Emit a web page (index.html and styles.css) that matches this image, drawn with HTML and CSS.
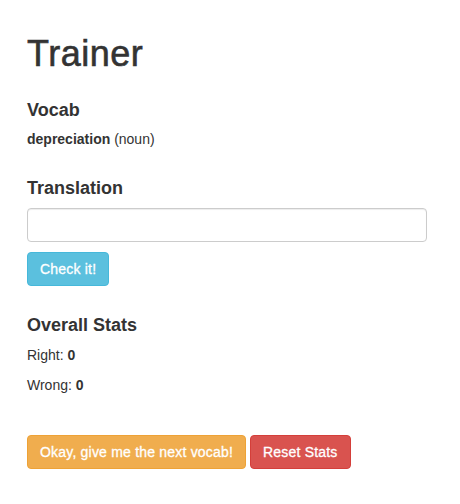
FILE: index.html
```html
<!DOCTYPE html>
<html>
<head>
<meta charset="utf-8">
<title>Trainer</title>
<link rel="stylesheet" href="styles.css">
</head>
<body>
<div class="container">
  <h1 class="title">Trainer</h1>

  <section class="section vocab">
    <h4 class="heading">Vocab</h4>
    <p class="line"><strong>depreciation</strong> (noun)</p>
  </section>

  <section class="section translation">
    <h4 class="heading">Translation</h4>
    <input class="input" type="text">
    <div class="actions">
      <button class="btn btn-info">Check it!</button>
    </div>
  </section>

  <section class="section stats">
    <h4 class="heading">Overall Stats</h4>
    <p class="line">Right: <strong>0</strong></p>
    <p class="line">Wrong: <strong>0</strong></p>
  </section>

  <div class="footer-actions">
    <button class="btn btn-warning">Okay, give me the next vocab!</button>
    <button class="btn btn-danger">Reset Stats</button>
  </div>
</div>
</body>
</html>
```

FILE: styles.css
```css
* { box-sizing: border-box; }
html, body {
  margin: 0;
  background: #fff;
}
body {
  font-family: "Liberation Sans", Arial, Helvetica, sans-serif;
  font-size: 14px;
  line-height: 20px;
  color: #333;
}
.container {
  padding: 34px 0 0 27px;
  width: 427px;
}
.title {
  font-size: 36px;
  font-weight: 500;
  line-height: 39.6px;
  letter-spacing: 0.5px;
  -webkit-text-stroke: 0.6px #333;
  margin: 0;
}
.section {
  margin-top: 27px;
}
.section.translation { margin-top: 30px; }
.section.stats { margin-top: 30px; }
.heading {
  font-size: 18px;
  font-weight: 700;
  line-height: 19.8px;
  margin: 0 0 9px;
}
.line {
  margin: 0 0 10px;
}
.line:last-child { margin-bottom: 0; }
.input {
  display: block;
  width: 400px;
  height: 34px;
  margin: 0;
  padding: 6px 12px;
  font: inherit;
  color: #555;
  background: #fff;
  border: 1px solid #ccc;
  border-radius: 4px;
  box-shadow: inset 0 1px 1px rgba(0,0,0,.075);
}
.actions {
  margin-top: 10px;
}
.btn {
  display: inline-block;
  height: 34px;
  padding: 6px 12px;
  font-family: inherit;
  font-size: 14px;
  line-height: 20px;
  font-weight: 400;
  letter-spacing: 0.2px;
  -webkit-text-stroke: 0.3px #fff;
  color: #fff;
  border: 1px solid transparent;
  border-radius: 4px;
  margin: 0;
  cursor: pointer;
}
.btn-info { background: #5bc0de; border-color: #46b8da; }
.btn-warning { background: #f0ad4e; border-color: #eea236; }
.btn-danger { background: #d9534f; border-color: #d43f3a; }
.footer-actions {
  margin-top: 40px;
}
```
